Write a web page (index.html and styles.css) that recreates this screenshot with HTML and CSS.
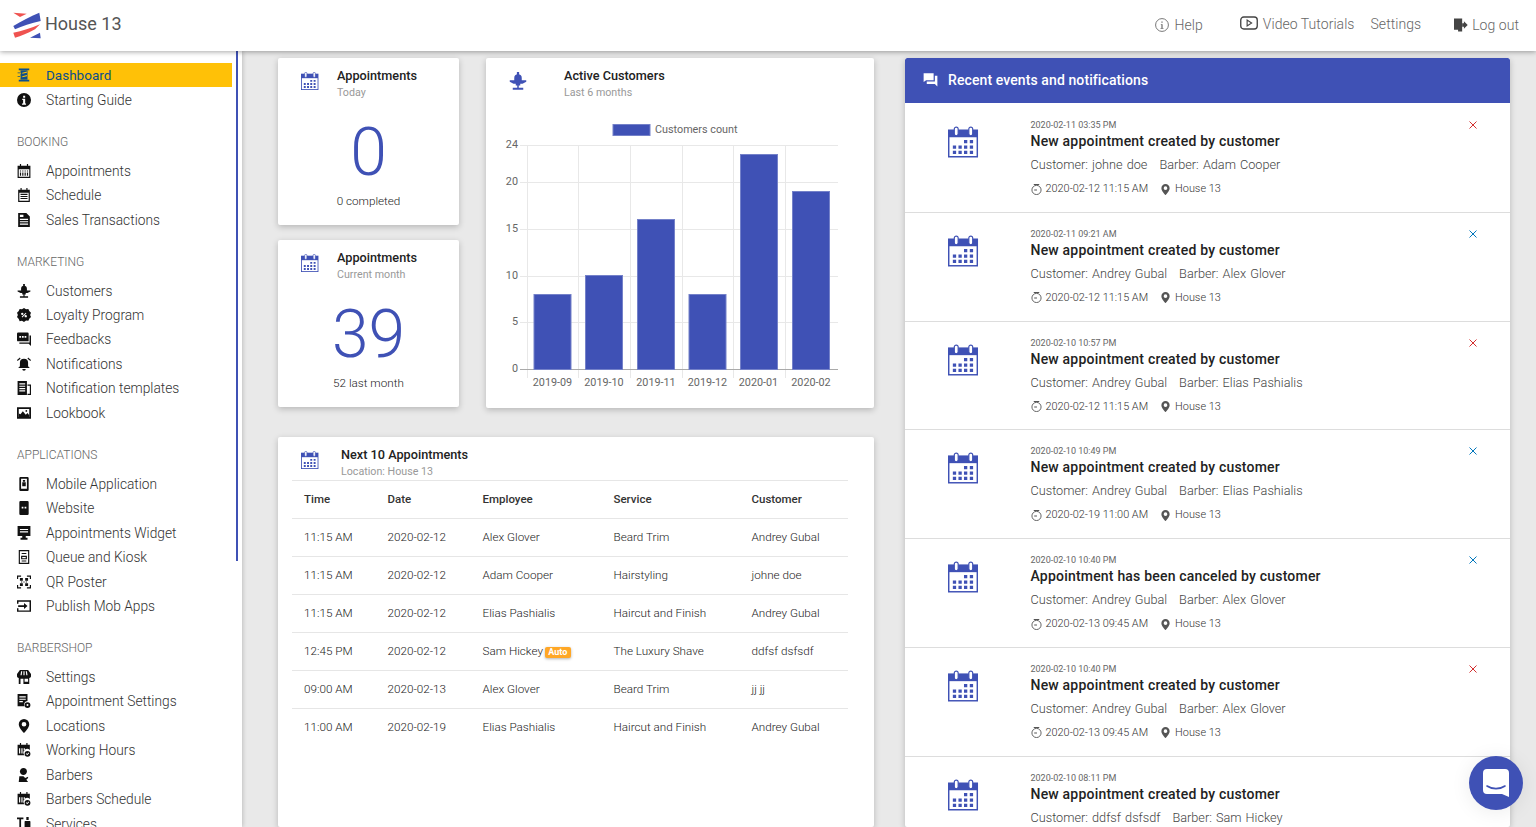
FILE: index.html
```html
<!DOCTYPE html>
<html lang="en">
<head>
<meta charset="utf-8">
<title>House 13</title>
<link rel="stylesheet" href="styles.css">
</head>
<body>
<svg class="defs" width="0" height="0" aria-hidden="true">
  <defs>
    <symbol id="i-pole" viewBox="0 0 24 24"><path d="M3 1h18v3H3zM3 20h18v3H3z"/><path d="M6 4h12v16H6z"/><path d="M2 8h5v2H2zM2 14h5v2H2zM9 8l8-2v2l-8 2zM9 14l8-2v2l-8 2z" fill="#ffc107"/><path d="M1 7.500h5v1.500H1zM1 13.500h5v1.500H1z"/></symbol>
    <symbol id="i-info" viewBox="0 0 24 24"><path fill-rule="evenodd" d="M12 0a12 12 0 1 0 0 24 12 12 0 0 0 0-24zM10.500 4.500h3.500v3.500h-3.500zM9 10h5v8h1.500v2h-7v-2h2v-6H9z"/></symbol>
    <symbol id="i-cal-grid" viewBox="0 0 24 24"><path fill-rule="evenodd" d="M1 3h4V0h2v3h10V0h2v3h4v21H1zM3 9v13h18V9z"/><path d="M5 11h2v2H5zM9 11h2v2H9zM13 11h2v2h-2zM17 11h2v2h-2zM5 14.500h2v5.500H5zM9 14.500h2v5.500H9zM13 14.500h2v5.500h-2zM17 14.500h2v5.500h-2z"/></symbol>
    <symbol id="i-cal-lines" viewBox="0 0 24 24"><path fill-rule="evenodd" d="M2 3h4V0h2v3h8V0h2v3h4v21H2zM4 8v14h16V8z"/><path d="M6 10h12v2H6zM6 13.500h12v2H6zM6 17h12v2H6z"/></symbol>
    <symbol id="i-doc" viewBox="0 0 24 24"><path fill-rule="evenodd" d="M2 0h14l6 6v18H2zM5 10v2h14v-2zM5 14v2h14v-2zM5 18v2h14v-2zM5 3v4h6V3z"/></symbol>
    <symbol id="i-chair" viewBox="0 0 24 24"><path d="M7 8a5 5 0 0 1 10 0v7H7zM10.500 0h3v4h-3zM1 11h22v2l-5 2.500H6L1 13zM9 15h6v3H9zM11 18h2v3h-2zM5 21h14v2.500H5z"/></symbol>
    <symbol id="i-badge" viewBox="0 0 24 24"><path fill-rule="evenodd" d="M12 0l3.500 2 4-.500 1.500 3.500 3 3L22.500 12l1.500 3.500-3 3-1.500 3.500-4-.500L12 24l-3.500-2-4 .500L3 19l-3-3.500L1.500 12 0 8l3-3 1.500-3.500 4 .500zM7 10a2 2 0 1 0 4 0 2 2 0 0 0-4 0zM13 14a2 2 0 1 0 4 0 2 2 0 0 0-4 0zM8 15l1.200 1.200 7-7L15 8z"/></symbol>
    <symbol id="i-chat" viewBox="0 0 24 24"><path fill-rule="evenodd" d="M0 3a2 2 0 0 1 2-2h16a2 2 0 0 1 2 2v13H2a2 2 0 0 1-2-2zM4 7v3h3V7zM8.500 7v3h3V7zM13 7v3h3V7z"/><path d="M21.500 6h2.500v18l-4-4H4v-2h17.500z"/></symbol>
    <symbol id="i-bell" viewBox="0 0 24 24"><path d="M12 3a7 7 0 0 1 7 7v6l3 3H2l3-3v-6a7 7 0 0 1 7-7zM9 20.500h6a3 3 0 0 1-6 0zM5 1L0 5l1 2 5-4zM19 1l5 4-1 2-5-4z"/></symbol>
    <symbol id="i-template" viewBox="0 0 24 24"><path fill-rule="evenodd" d="M1 0h16v24H1zM4 4v2h10V4zM4 8v2h10V8zM4 12v2h10v-2zM4 16v2h10v-2z"/><path fill-rule="evenodd" d="M18 6h6v18h-6v-2h4V8h-4z"/></symbol>
    <symbol id="i-photo" viewBox="0 0 24 24"><path fill-rule="evenodd" d="M0 2h24v20H0zM3 5v14h18V5z"/><circle cx="16" cy="8.500" r="1.500"/><path d="M3 13v6h18v-3l-3-4-3 3-5-6-4 5z"/></symbol>
    <symbol id="i-phone-a" viewBox="0 0 24 24"><path fill-rule="evenodd" d="M6 0h12a2 2 0 0 1 2 2v20a2 2 0 0 1-2 2H6a2 2 0 0 1-2-2V2a2 2 0 0 1 2-2zM7 3v17h10V3zM10 5h4v3h-4zM9 9h6v7H9z"/></symbol>
    <symbol id="i-phone-b" viewBox="0 0 24 24"><path fill-rule="evenodd" d="M6 0h12a2 2 0 0 1 2 2v20a2 2 0 0 1-2 2H6a2 2 0 0 1-2-2V2a2 2 0 0 1 2-2zM8 10v3h3v-3zM13 10v3h3v-3z"/></symbol>
    <symbol id="i-monitor" viewBox="0 0 24 24"><path fill-rule="evenodd" d="M1 0h22v17H1zM5 5v2h14V5zM5 9v2h14V9z"/><path d="M9 17h6v3h3v3.500H6V20h3z"/></symbol>
    <symbol id="i-kiosk" viewBox="0 0 24 24"><path fill-rule="evenodd" d="M3 0h18v24H3zM5 2v20h14V2zM8 5h8v2H8zM7 10h10v6H7zM9 12v2h6v-2zM8 18h8v1.500H8z"/></symbol>
    <symbol id="i-qr" viewBox="0 0 24 24"><path d="M0 1h7v2H2v4H0zM17 1h7v6h-2V3h-5zM0 17h2v4h5v2H0zM22 17h2v6h-7v-2h5zM5 5h5v5H5zM14 5h5v5h-5zM5 14h5v5H5zM14 14h5v5h-5zM11 11h2v2h-2zM7 11h2v2H7zM15 11h2v2h-2z"/></symbol>
    <symbol id="i-publish" viewBox="0 0 24 24"><path d="M0 2h24v20H0v-6h2.500v3.500h19v-15h-19V8H0z"/><path d="M2 10.500h10V7l6 5-6 5v-3.500H2z"/></symbol>
    <symbol id="i-store" viewBox="0 0 24 24"><path fill-rule="evenodd" d="M5 0h14l5 7v4a3 3 0 0 1-3 2.500V24H3V13.500A3 3 0 0 1 0 11V7zM6 15v9h5v-9zM13 15v5h6v-5zM7 2l-1 7h2l1-7zM11 2v7h2V2zM15 2l1 7h2l-1-7z"/></symbol>
    <symbol id="i-doc-gear" viewBox="0 0 24 24"><path fill-rule="evenodd" d="M1 0h17v12a6 6 0 0 0-5 9H1zM4 4v2h11V4zM4 8v2h11V8zM4 12v2h6v-2z"/><path fill-rule="evenodd" d="M18 14a5 5 0 1 0 0 10 5 5 0 0 0 0-10zm0 3.300a1.700 1.700 0 1 1 0 3.400 1.700 1.700 0 0 1 0-3.400z"/></symbol>
    <symbol id="i-pin" viewBox="0 0 24 24"><path fill-rule="evenodd" d="M12 0a9 9 0 0 0-9 9c0 6.500 9 15 9 15s9-8.500 9-15a9 9 0 0 0-9-9zm0 5a4 4 0 1 1 0 8 4 4 0 0 1 0-8z"/></symbol>
    <symbol id="i-cal-check" viewBox="0 0 24 24"><path fill-rule="evenodd" d="M1 3h4V0h2v3h9V0h2v3h4v9a6 6 0 0 0-9 9H1zM3.500 9v9h2V9zM7.500 9v9h2V9zM11.500 9v4h2V9z"/><path fill-rule="evenodd" d="M18 13.500a5 5 0 1 0 0 10 5 5 0 0 0 0-10zm-2.800 5l1-1 1.300 1.300 2.300-2.400 1 1-3.300 3.500z"/></symbol>
    <symbol id="i-barber" viewBox="0 0 24 24"><path d="M11 0a6 6 0 0 1 6 6c0 3.300-2.700 6-6 6S5 9.300 5 6s2.700-6 6-6z"/><path d="M4 14h7l3 3 5-2v2l-3 3 3 4H3z"/></symbol>
    <symbol id="i-tools" viewBox="0 0 24 24"><path d="M0 1h11v3H7v20H4V4H0zM14 7h8a1 1 0 0 1 1 1v16H13V8a1 1 0 0 1 1-1zM16 0h4v5h-4z"/></symbol>
    <symbol id="i-cal-big" viewBox="0 0 32 32"><path d="M0 3h31v29H0z"/><path d="M1.500 11h28v19.500h-28z" fill="#fff"/><rect x="6.500" y=".6" width="4" height="9" rx="2" fill="#fff" stroke="currentColor" stroke-width="1.200"/><rect x="21.500" y=".6" width="4" height="9" rx="2" fill="#fff" stroke="currentColor" stroke-width="1.200"/><path d="M16.500 14h3.400v3.400h-3.400zM22.500 14h3.400v3.400h-3.400zM5 19.500h3.400v3.400H5zM10.800 19.500h3.400v3.400h-3.400zM16.500 19.500h3.400v3.400h-3.400zM22.500 19.500h3.400v3.400h-3.400zM5 25h3.400v3.400H5zM10.800 25h3.400v3.400h-3.400zM16.500 25h3.400v3.400h-3.400zM22.500 25h3.400v3.400h-3.400z"/></symbol>
    <symbol id="i-clock" viewBox="0 0 24 24"><circle cx="12" cy="13" r="10" fill="none" stroke="currentColor" stroke-width="2"/><path d="M7 12h6v2H7zM6 0h12v2H6z"/></symbol>
    <symbol id="i-x" viewBox="0 0 10 10"><path d="M1.500 1.500l7 7M8.500 1.500l-7 7" fill="none" stroke="currentColor" stroke-width="1"/></symbol>
  </defs>
</svg>

<header class="topbar">
  <svg class="logo" viewBox="0 0 28 27" aria-hidden="true">
    <path d="M.3.700L13.700 1.700 7 5z" fill="#ef5350"/>
    <path d="M.3 14C9 9 18 4 26.300.700L27.700 9C18 11 9 14 2 17.300z" fill="#3f51b5"/>
    <path d="M.3 20.700C9 19 18 16 27 12.300L22 17.300C15 21 8 24 2 25.700z" fill="#ef5350"/>
    <path d="M17 25.700l10-5 .7 5.600z" fill="#3f51b5"/>
  </svg>
  <span class="brand">House 13</span>
  <nav class="topnav">
    <a class="topnav-link link-help low">
      <svg class="top-icon" viewBox="0 0 24 24" aria-hidden="true"><circle cx="12" cy="12" r="11" fill="none" stroke="currentColor" stroke-width="1.500"/><path d="M11 6h2v2h-2zM10 10.500h3V17h1.500v1.500h-5V17H11v-5h-1z"/></svg>
      Help
    </a>
    <a class="topnav-link link-video">
      <svg class="top-icon video-icon" viewBox="0 0 24 18" aria-hidden="true"><rect x="1" y="1" width="22" height="16" rx="4" fill="none" stroke="#444" stroke-width="1.800"/><path d="M9.500 5v8l6-4z" fill="none" stroke="#444" stroke-width="1.500"/></svg>
      Video Tutorials
    </a>
    <a class="topnav-link link-settings">Settings</a>
    <a class="topnav-link link-logout low">
      <svg class="top-icon" viewBox="0 0 24 24" aria-hidden="true"><path d="M0 1h14v22H7v-3H0z" fill="#444"/><path d="M14 9h3V5.500L23.500 12 17 18.500V15h-3z" fill="#444"/></svg>
      Log out
    </a>
  </nav>
</header>

<div class="layout">
  <aside class="sidebar">
    <span class="side-thumb"></span>
    <ul class="side-list">
      <li class="side-item active"><svg class="side-icon"><use href="#i-pole"/></svg>Dashboard</li>
      <li class="side-item"><svg class="side-icon"><use href="#i-info"/></svg>Starting Guide</li>
    </ul>
    <h4 class="side-label">Booking</h4>
    <ul class="side-list">
      <li class="side-item"><svg class="side-icon"><use href="#i-cal-grid"/></svg>Appointments</li>
      <li class="side-item"><svg class="side-icon"><use href="#i-cal-lines"/></svg>Schedule</li>
      <li class="side-item"><svg class="side-icon"><use href="#i-doc"/></svg>Sales Transactions</li>
    </ul>
    <h4 class="side-label">Marketing</h4>
    <ul class="side-list">
      <li class="side-item"><svg class="side-icon"><use href="#i-chair"/></svg>Customers</li>
      <li class="side-item"><svg class="side-icon"><use href="#i-badge"/></svg>Loyalty Program</li>
      <li class="side-item"><svg class="side-icon"><use href="#i-chat"/></svg>Feedbacks</li>
      <li class="side-item"><svg class="side-icon"><use href="#i-bell"/></svg>Notifications</li>
      <li class="side-item"><svg class="side-icon"><use href="#i-template"/></svg>Notification templates</li>
      <li class="side-item"><svg class="side-icon"><use href="#i-photo"/></svg>Lookbook</li>
    </ul>
    <h4 class="side-label">Applications</h4>
    <ul class="side-list">
      <li class="side-item"><svg class="side-icon"><use href="#i-phone-a"/></svg>Mobile Application</li>
      <li class="side-item"><svg class="side-icon"><use href="#i-phone-b"/></svg>Website</li>
      <li class="side-item"><svg class="side-icon"><use href="#i-monitor"/></svg>Appointments Widget</li>
      <li class="side-item"><svg class="side-icon"><use href="#i-kiosk"/></svg>Queue and Kiosk</li>
      <li class="side-item"><svg class="side-icon"><use href="#i-qr"/></svg>QR Poster</li>
      <li class="side-item"><svg class="side-icon"><use href="#i-publish"/></svg>Publish Mob Apps</li>
    </ul>
    <h4 class="side-label">Barbershop</h4>
    <ul class="side-list">
      <li class="side-item"><svg class="side-icon"><use href="#i-store"/></svg>Settings</li>
      <li class="side-item"><svg class="side-icon"><use href="#i-doc-gear"/></svg>Appointment Settings</li>
      <li class="side-item"><svg class="side-icon"><use href="#i-pin"/></svg>Locations</li>
      <li class="side-item"><svg class="side-icon"><use href="#i-cal-check"/></svg>Working Hours</li>
      <li class="side-item"><svg class="side-icon"><use href="#i-barber"/></svg>Barbers</li>
      <li class="side-item"><svg class="side-icon"><use href="#i-cal-check"/></svg>Barbers Schedule</li>
      <li class="side-item"><svg class="side-icon"><use href="#i-tools"/></svg>Services</li>
    </ul>
  </aside>

  <main class="content">
    <div class="col-left">
      <div class="top-row">
        <div class="stat-col">
          <section class="card stat-card">
            <div class="card-head">
              <svg class="head-icon"><use href="#i-cal-big"/></svg>
              <div>
                <div class="head-title">Appointments</div>
                <div class="head-sub">Today</div>
              </div>
            </div>
            <div class="stat-num">0</div>
            <div class="stat-foot">0 completed</div>
          </section>
          <section class="card stat-card">
            <div class="card-head">
              <svg class="head-icon"><use href="#i-cal-big"/></svg>
              <div>
                <div class="head-title">Appointments</div>
                <div class="head-sub">Current month</div>
              </div>
            </div>
            <div class="stat-num">39</div>
            <div class="stat-foot">52 last month</div>
          </section>
        </div>
        <section class="card chart-card">
          <div class="card-head chart-head">
            <svg class="head-icon"><use href="#i-chair"/></svg>
            <div>
              <div class="head-title">Active Customers</div>
              <div class="head-sub">Last 6 months</div>
            </div>
          </div>
          <svg class="chart" viewBox="486 118 388 290" role="img" aria-label="Customers count bar chart">
            <g class="grid">
              <path d="M520 145.500H838M520 182.500H838M520 229.500H838M520 276.500H838M520 322.500H838"/>
              <path d="M527.500 145V378M578.500 145V378M630.500 145V378M682.500 145V378M733.500 145V378M785.500 145V378"/>
            </g>
            <path class="axis" d="M520 369.500H838"/>
            <g class="bars">
              <rect x="534" y="294.500" width="37" height="75"/>
              <rect x="585.500" y="275.500" width="37" height="94"/>
              <rect x="637.500" y="219.500" width="37" height="150"/>
              <rect x="689" y="294.500" width="37" height="75"/>
              <rect x="740.500" y="154.500" width="37" height="215"/>
              <rect x="792.500" y="191.500" width="37" height="178"/>
            </g>
            <rect class="legend-box" x="613" y="124.500" width="37" height="11"/>
            <text class="chart-text" x="655" y="133">Customers count</text>
            <g class="chart-text y-ticks">
              <text x="518" y="148">24</text>
              <text x="518" y="185">20</text>
              <text x="518" y="232">15</text>
              <text x="518" y="279">10</text>
              <text x="518" y="325">5</text>
              <text x="518" y="372">0</text>
            </g>
            <g class="chart-text x-ticks">
              <text x="552.500" y="386">2019-09</text>
              <text x="604" y="386">2019-10</text>
              <text x="656" y="386">2019-11</text>
              <text x="707.500" y="386">2019-12</text>
              <text x="758.500" y="386">2020-01</text>
              <text x="811" y="386">2020-02</text>
            </g>
          </svg>
        </section>
      </div>

      <section class="card table-card">
        <div class="card-head table-head">
          <svg class="head-icon"><use href="#i-cal-big"/></svg>
          <div>
            <div class="head-title">Next 10 Appointments</div>
            <div class="head-sub">Location: House 13</div>
          </div>
        </div>
        <table class="appt-table">
          <colgroup>
            <col class="c-time"><col class="c-date"><col class="c-emp"><col class="c-serv"><col class="c-cust">
          </colgroup>
          <thead>
            <tr><th>Time</th><th>Date</th><th>Employee</th><th>Service</th><th>Customer</th></tr>
          </thead>
          <tbody>
            <tr><td>11:15 AM</td><td>2020-02-12</td><td>Alex Glover</td><td>Beard Trim</td><td>Andrey Gubal</td></tr>
            <tr><td>11:15 AM</td><td>2020-02-12</td><td>Adam Cooper</td><td>Hairstyling</td><td>johne doe</td></tr>
            <tr><td>11:15 AM</td><td>2020-02-12</td><td>Elias Pashialis</td><td>Haircut and Finish</td><td>Andrey Gubal</td></tr>
            <tr><td>12:45 PM</td><td>2020-02-12</td><td>Sam Hickey <span class="auto">Auto</span></td><td>The Luxury Shave</td><td>ddfsf dsfsdf</td></tr>
            <tr><td>09:00 AM</td><td>2020-02-13</td><td>Alex Glover</td><td>Beard Trim</td><td>jj jj</td></tr>
            <tr><td>11:00 AM</td><td>2020-02-19</td><td>Elias Pashialis</td><td>Haircut and Finish</td><td>Andrey Gubal</td></tr>
          </tbody>
        </table>
      </section>
    </div>

    <section class="card events">
      <div class="events-head">
        <svg class="events-head-icon" viewBox="0 0 24 24" aria-hidden="true"><path d="M1 2h16v11H5l-4 3z"/><path d="M19 6h4v17l-4-4H6v-4h13z"/></svg>
        Recent events and notifications
      </div>

      <article class="event">
        <svg class="event-icon"><use href="#i-cal-big"/></svg>
        <div class="event-body">
          <div class="event-time">2020-02-11 03:35 PM</div>
          <div class="event-title">New appointment created by customer</div>
          <div class="event-people"><span>Customer: johne doe</span><span>Barber: Adam Cooper</span></div>
          <div class="event-meta"><svg class="meta-icon"><use href="#i-clock"/></svg><span class="meta-when">2020-02-12 11:15 AM</span><svg class="meta-icon"><use href="#i-pin"/></svg><span>House 13</span></div>
        </div>
        <svg class="event-x red"><use href="#i-x"/></svg>
      </article>

      <article class="event">
        <svg class="event-icon"><use href="#i-cal-big"/></svg>
        <div class="event-body">
          <div class="event-time">2020-02-11 09:21 AM</div>
          <div class="event-title">New appointment created by customer</div>
          <div class="event-people"><span>Customer: Andrey Gubal</span><span>Barber: Alex Glover</span></div>
          <div class="event-meta"><svg class="meta-icon"><use href="#i-clock"/></svg><span class="meta-when">2020-02-12 11:15 AM</span><svg class="meta-icon"><use href="#i-pin"/></svg><span>House 13</span></div>
        </div>
        <svg class="event-x teal"><use href="#i-x"/></svg>
      </article>

      <article class="event">
        <svg class="event-icon"><use href="#i-cal-big"/></svg>
        <div class="event-body">
          <div class="event-time">2020-02-10 10:57 PM</div>
          <div class="event-title">New appointment created by customer</div>
          <div class="event-people"><span>Customer: Andrey Gubal</span><span>Barber: Elias Pashialis</span></div>
          <div class="event-meta"><svg class="meta-icon"><use href="#i-clock"/></svg><span class="meta-when">2020-02-12 11:15 AM</span><svg class="meta-icon"><use href="#i-pin"/></svg><span>House 13</span></div>
        </div>
        <svg class="event-x red"><use href="#i-x"/></svg>
      </article>

      <article class="event">
        <svg class="event-icon"><use href="#i-cal-big"/></svg>
        <div class="event-body">
          <div class="event-time">2020-02-10 10:49 PM</div>
          <div class="event-title">New appointment created by customer</div>
          <div class="event-people"><span>Customer: Andrey Gubal</span><span>Barber: Elias Pashialis</span></div>
          <div class="event-meta"><svg class="meta-icon"><use href="#i-clock"/></svg><span class="meta-when">2020-02-19 11:00 AM</span><svg class="meta-icon"><use href="#i-pin"/></svg><span>House 13</span></div>
        </div>
        <svg class="event-x teal"><use href="#i-x"/></svg>
      </article>

      <article class="event">
        <svg class="event-icon"><use href="#i-cal-big"/></svg>
        <div class="event-body">
          <div class="event-time">2020-02-10 10:40 PM</div>
          <div class="event-title">Appointment has been canceled by customer</div>
          <div class="event-people"><span>Customer: Andrey Gubal</span><span>Barber: Alex Glover</span></div>
          <div class="event-meta"><svg class="meta-icon"><use href="#i-clock"/></svg><span class="meta-when">2020-02-13 09:45 AM</span><svg class="meta-icon"><use href="#i-pin"/></svg><span>House 13</span></div>
        </div>
        <svg class="event-x teal"><use href="#i-x"/></svg>
      </article>

      <article class="event">
        <svg class="event-icon"><use href="#i-cal-big"/></svg>
        <div class="event-body">
          <div class="event-time">2020-02-10 10:40 PM</div>
          <div class="event-title">New appointment created by customer</div>
          <div class="event-people"><span>Customer: Andrey Gubal</span><span>Barber: Alex Glover</span></div>
          <div class="event-meta"><svg class="meta-icon"><use href="#i-clock"/></svg><span class="meta-when">2020-02-13 09:45 AM</span><svg class="meta-icon"><use href="#i-pin"/></svg><span>House 13</span></div>
        </div>
        <svg class="event-x red"><use href="#i-x"/></svg>
      </article>

      <article class="event">
        <svg class="event-icon"><use href="#i-cal-big"/></svg>
        <div class="event-body">
          <div class="event-time">2020-02-10 08:11 PM</div>
          <div class="event-title">New appointment created by customer</div>
          <div class="event-people"><span>Customer: ddfsf dsfsdf</span><span>Barber: Sam Hickey</span></div>
        </div>
      </article>
    </section>
  </main>
</div>

<button class="chat-btn" type="button" aria-label="Open chat">
  <svg viewBox="0 0 26 28" width="26" height="28" aria-hidden="true">
    <path d="M4 0h18a4 4 0 0 1 4 4v24l-7-3H4a4 4 0 0 1-4-4V4a4 4 0 0 1 4-4z" fill="#fff"/>
    <path d="M4 17c5 3.500 13 3.500 18 0" fill="none" stroke="#3f51b5" stroke-width="1.600" stroke-linecap="round"/>
  </svg>
</button>
</body>
</html>
```

FILE: styles.css
```css
* { box-sizing: border-box; }

html, body {
  height: 100%;
}

body {
  margin: 0;
  height: 100vh;
  overflow: hidden;
  display: flex;
  flex-direction: column;
  background: #e9e9e9;
  font-family: Roboto, "Liberation Sans", sans-serif;
  color: #444;
}

.defs { position: absolute; }

/* Top bar */
.topbar {
  flex: none;
  height: 51px;
  display: flex;
  align-items: center;
  padding: 0 17px 3px 13px;
  background: #fff;
  box-shadow: 0 1px 5px rgba(0, 0, 0, .35);
  position: relative;
  z-index: 3;
}

.logo {
  width: 28px;
  height: 27px;
  margin-right: 4px;
  margin-top: 2px;
}

.brand {
  font-size: 18px;
  font-weight: 400;
  color: #555;
  margin-top: -1px;
}

.topnav {
  margin-left: auto;
  display: flex;
  align-items: center;
  font-size: 14px;
  font-weight: 300;
  letter-spacing: .05px;
  color: #666;
}

.topnav-link {
  display: flex;
  align-items: center;
  gap: 4px;
}

.low { padding-top: 2px; }

.top-icon {
  width: 14px;
  height: 14px;
  fill: currentColor;
}

.video-icon {
  width: 18px;
  height: 14px;
  margin-top: -2px;
}

.link-help { gap: 5px; }
.link-video { margin-left: 37px; gap: 5px; }
.link-settings { margin-left: 16px; }
.link-logout { margin-left: 33px; }

/* Layout */
.layout {
  flex: 1;
  min-height: 0;
  display: flex;
}

.sidebar {
  flex: none;
  width: 242px;
  padding: 12px 10px 0 0;
  background: #fff;
  overflow: hidden;
  position: relative;
  box-shadow: 1px 0 4px rgba(0, 0, 0, .18);
  z-index: 2;
}

.side-thumb {
  position: absolute;
  top: 0;
  right: 4px;
  width: 2px;
  height: 510px;
  background: #3f51b5;
}

.side-list {
  list-style: none;
  margin: 0;
  padding: 0;
}

.side-item {
  height: 24.45px;
  display: flex;
  align-items: center;
  padding-left: 17px;
  font-size: 13.75px;
  font-weight: 300;
  color: #333;
}

.side-item.active {
  background: #ffc107;
  color: #0d4f8b;
  height: 24px;
  margin-bottom: .45px;
  font-weight: 400;
  font-size: 13.5px;
}

.side-icon {
  flex: none;
  width: 14px;
  height: 14px;
  margin-right: 15px;
  fill: #111;
}

.active .side-icon { fill: #0d4f8b; }

.side-label {
  margin: 0;
  padding: 20px 0 6.6px 17px;
  font-size: 12px;
  line-height: 20px;
  font-weight: 300;
  text-transform: uppercase;
  color: #666;
}

/* Content */
.content {
  flex: 1;
  min-width: 0;
  display: grid;
  grid-template-columns: 596px 605px;
  column-gap: 31px;
  padding: 7px 0 0 36px;
  overflow: hidden;
}

.card {
  background: #fff;
  border-radius: 2px;
  box-shadow: 0 2px 6px rgba(0, 0, 0, .22);
}

.col-left {
  display: flex;
  flex-direction: column;
  min-height: 0;
}

.top-row {
  display: flex;
  gap: 27px;
}

.stat-col {
  width: 181px;
  display: flex;
  flex-direction: column;
  gap: 15px;
}

.stat-card {
  height: 167px;
  text-align: center;
}

.card-head {
  display: flex;
  padding: 10px 0 0 23px;
  height: 42px;
  text-align: left;
}

.head-icon {
  flex: none;
  width: 18px;
  height: 18px;
  margin: 4px 18px 0 0;
  color: #3f51b5;
  fill: #3f51b5;
}

.head-title {
  font-size: 12.7px;
  line-height: 16px;
  font-weight: 500;
  color: #222;
}

.head-sub {
  margin-top: 1px;
  font-size: 10.7px;
  line-height: 16px;
  color: #999;
}

.stat-num {
  margin-top: 23px;
  font-size: 66px;
  line-height: 60px;
  font-weight: 300;
  color: #3f51b5;
}

.stat-foot {
  margin-top: 8px;
  font-size: 11.7px;
  line-height: 20px;
  font-weight: 300;
  color: #222;
}

.chart-card {
  width: 388px;
  height: 350px;
}

.chart-head .head-icon { margin-right: 37px; }
.chart-head { height: 60px; }

.chart {
  display: block;
  width: 388px;
  height: 290px;
}

.grid path {
  fill: none;
  stroke: #e8e8e8;
  stroke-width: 1;
}

.axis {
  fill: none;
  stroke: #aaa;
  stroke-width: 1;
}

.bars rect, .legend-box {
  fill: #3f51b5;
  stroke: #7481c9;
  stroke-width: 1;
}

.chart-text {
  font-size: 10.8px;
  fill: #666;
}

.y-ticks text { text-anchor: end; }
.x-ticks text { text-anchor: middle; }

.table-card {
  flex: 1;
  min-height: 0;
  margin-top: 29px;
  padding: 0 26px 0 14px;
}

.table-head {
  height: 43px;
  padding: 10px 0 0 9px;
}

.table-head .head-icon { margin-right: 22px; }

.appt-table {
  width: 556px;
  table-layout: fixed;
  border-collapse: collapse;
  font-size: 11.7px;
  font-weight: 300;
  color: #222;
}

.c-time { width: 83.5px; }
.c-date { width: 95px; }
.c-emp { width: 131px; }
.c-serv { width: 138px; }

.appt-table th,
.appt-table td {
  height: 38px;
  padding: 0 0 2px 12px;
  text-align: left;
  white-space: nowrap;
}

.appt-table th {
  font-size: 11.5px;
  font-weight: 500;
  color: #333;
  border-top: 1px solid #e6e6e6;
  border-bottom: 1px solid #e6e6e6;
}

.appt-table tbody tr:not(:last-child) td {
  border-bottom: 1px solid #e6e6e6;
}

.auto {
  display: inline-block;
  padding: 0 3.5px;
  margin-left: -1px;
  font-size: 9px;
  line-height: 11px;
  font-weight: 700;
  color: #fff;
  background: #ffa726;
  border-radius: 2px;
  box-shadow: 0 1px 3px rgba(0, 0, 0, .3);
  vertical-align: 0;
}

/* Events */
.events {
  min-height: 0;
  overflow: hidden;
}

.events-head {
  height: 45px;
  display: flex;
  align-items: center;
  gap: 10px;
  padding: 0 0 2px 18px;
  background: #3f51b5;
  border-radius: 2px 2px 0 0;
  color: #fff;
  font-size: 14px;
  font-weight: 500;
  letter-spacing: .1px;
}

.events-head-icon {
  width: 15px;
  height: 15px;
  fill: #fff;
}

.event {
  height: 108.8px;
  display: flex;
  padding: 16px 0 0 43px;
  position: relative;
}

.event + .event {
  box-shadow: inset 0 1px 0 #ddd;
}

.event-icon {
  flex: none;
  width: 31px;
  height: 32px;
  margin: 7px 51.5px 0 0;
  color: #3f51b5;
  fill: #3f51b5;
}

.event-time {
  font-size: 9px;
  line-height: 12px;
  color: #666;
}

.event-title {
  font-size: 14px;
  line-height: 20px;
  font-weight: 500;
  color: #222;
  letter-spacing: .2px;
}

.event-people {
  display: flex;
  gap: 12px;
  margin-top: 4px;
  font-size: 12.7px;
  font-weight: 300;
  line-height: 20px;
  word-spacing: 1px;
  color: #444;
}

.event-meta {
  display: flex;
  align-items: center;
  margin-top: 4px;
  font-size: 10.9px;
  font-weight: 300;
  line-height: 20px;
  color: #333;
}

.meta-icon {
  width: 11px;
  height: 11px;
  margin-right: 4px;
  color: #555;
  fill: #555;
}

.meta-when { margin-right: 12px; }

.event-x {
  position: absolute;
  top: 17px;
  left: 563px;
  width: 10px;
  height: 10px;
}

.event-x.red { color: #d32f2f; }
.event-x.teal { color: #0277bd; }

.chat-btn {
  position: fixed;
  left: 1469px;
  top: 756px;
  width: 54px;
  height: 54px;
  padding: 0;
  border: 0;
  border-radius: 50%;
  display: flex;
  align-items: center;
  justify-content: center;
  background: #3f51b5;
  box-shadow: 0 2px 20px rgba(0, 0, 0, .08);
}
```
